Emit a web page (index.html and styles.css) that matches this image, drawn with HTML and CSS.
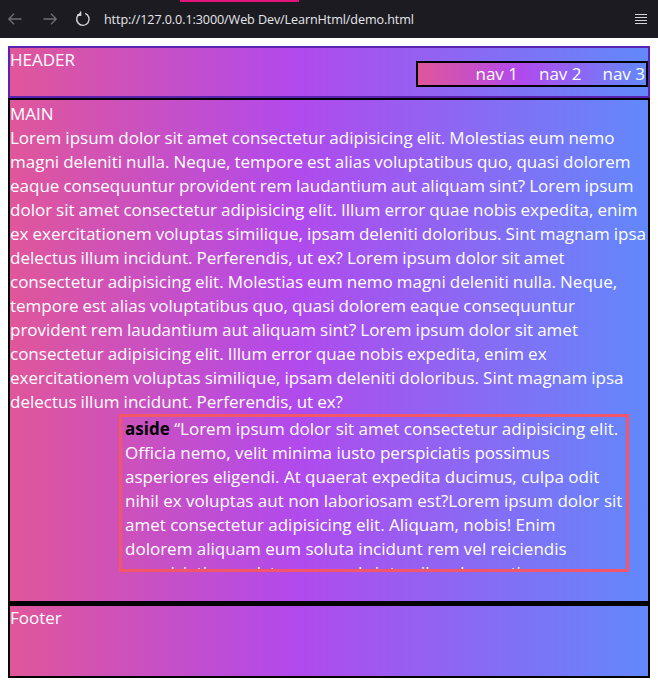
FILE: index.html
```html
<!DOCTYPE html>
<html lang="en">
<head>
<meta charset="utf-8">
<title>demo</title>
<link rel="stylesheet" href="styles.css">
</head>
<body>
<div class="browser-bar">
  <span class="tab-mark"></span>
  <svg class="bar-icon back" viewBox="0 0 16 16" width="16" height="16"><path d="M14.5 8H1.8M7 2.8L1.8 8 7 13.2" fill="none" stroke="#6f6e75" stroke-width="1.3"/></svg>
  <svg class="bar-icon fwd" viewBox="0 0 16 16" width="16" height="16"><path d="M1.5 8h12.7M9 2.8L14.2 8 9 13.2" fill="none" stroke="#6f6e75" stroke-width="1.3"/></svg>
  <svg class="bar-icon reload" viewBox="0 0 16 16" width="16" height="16"><path d="M10.2 2.4A6.2 6.2 0 1 1 5.4 2.5" fill="none" stroke="#d6d6da" stroke-width="1.4"/><path d="M5.6 0.6v3.6H2" fill="none" stroke="#d6d6da" stroke-width="1.4"/></svg>
  <span class="url">http://127.0.0.1:3000/Web Dev/LearnHtml/demo.html</span>
  <svg class="bar-icon menu" viewBox="0 0 14 14" width="14" height="14"><path d="M1 2.5h12M1 5.5h12M1 8.5h12M1 11.5h12" stroke="#d6d6da" stroke-width="1.2"/></svg>
</div>
<div class="page">
  <header class="site-header">
    <span class="label">HEADER</span>
    <nav class="site-nav">
      <span>nav 1</span>
      <span>nav 2</span>
      <span>nav 3</span>
    </nav>
  </header>
  <main class="site-main">
    <div class="label">MAIN</div>
    <p class="body-text">Lorem ipsum dolor sit amet consectetur adipisicing elit. Molestias eum nemo magni deleniti nulla. Neque, tempore est alias voluptatibus quo, quasi dolorem eaque consequuntur provident rem laudantium aut aliquam sint? Lorem ipsum dolor sit amet consectetur adipisicing elit. Illum error quae nobis expedita, enim ex exercitationem voluptas similique, ipsam deleniti doloribus. Sint magnam ipsa delectus illum incidunt. Perferendis, ut ex? Lorem ipsum dolor sit amet consectetur adipisicing elit. Molestias eum nemo magni deleniti nulla. Neque, tempore est alias voluptatibus quo, quasi dolorem eaque consequuntur provident rem laudantium aut aliquam sint? Lorem ipsum dolor sit amet consectetur adipisicing elit. Illum error quae nobis expedita, enim ex exercitationem voluptas similique, ipsam deleniti doloribus. Sint magnam ipsa delectus illum incidunt. Perferendis, ut ex?</p>
    <aside class="side-note"><b>aside</b> “Lorem ipsum dolor sit amet consectetur adipisicing elit. Officia nemo, velit minima iusto perspiciatis possimus asperiores eligendi. At quaerat expedita ducimus, culpa odit nihil ex voluptas aut non laboriosam est?Lorem ipsum dolor sit amet consectetur adipisicing elit. Aliquam, nobis! Enim dolorem aliquam eum soluta incidunt rem vel reiciendis perspiciatis quod, tempora ad sint quibusdam ratione laborum.”</aside>
  </main>
  <footer class="site-footer">
    <span class="label">Footer</span>
  </footer>
</div>
</body>
</html>
```

FILE: styles.css
```css
* {
  box-sizing: border-box;
}

html,
body {
  margin: 0;
  padding: 0;
}

body {
  background: #ffffff;
  font-family: "Open Sans", "Noto Sans", sans-serif;
}

.browser-bar {
  position: relative;
  height: 38px;
  background: #1c1b22;
  display: flex;
  align-items: center;
  padding: 0 10px 0 7px;
}

.tab-mark {
  position: absolute;
  top: 0;
  left: 180px;
  width: 119px;
  height: 2px;
  background: #e0157c;
}

.bar-icon {
  flex: none;
  display: block;
}

.fwd {
  margin-left: 19px;
}

.reload {
  margin-left: 17px;
}

.url {
  margin-left: 13px;
  color: #e6e6ea;
  font-family: "Open Sans", sans-serif;
  font-size: 12.6px;
  letter-spacing: -0.1px;
}

.menu {
  margin-left: auto;
}

.page {
  padding: 8px;
}

.site-header,
.site-main,
.site-footer,
.site-nav {
  background: linear-gradient(to right, #e0569a 0%, #b14aed 45%, #6288fc 100%);
  color: #fff;
  font-size: 17px;
  line-height: 24px;
}

.site-header {
  display: flex;
  justify-content: space-between;
  align-items: flex-start;
  height: 52px;
  border: 2px solid #5a22b0;
}

.site-nav {
  margin-top: 13px;
  width: 232px;
  height: 26px;
  border: 2px solid #000;
  display: flex;
  justify-content: flex-end;
  gap: 21px;
  line-height: 22px;
  padding-right: 1px;
}

.site-main {
  border: 2px solid #000;
  padding-top: 2px;
}

.body-text {
  margin: 0;
  word-spacing: -0.4px;
}

.side-note {
  display: block;
  width: 510px;
  height: 158px;
  margin: 0 19px 29px auto;
  padding: 0 3px;
  border: 3px solid #f25668;
  overflow: hidden;
}

.side-note b {
  color: #000;
}

.site-footer {
  height: 75px;
  border: 2px solid #000;
  border-top-width: 3px;
}
```
